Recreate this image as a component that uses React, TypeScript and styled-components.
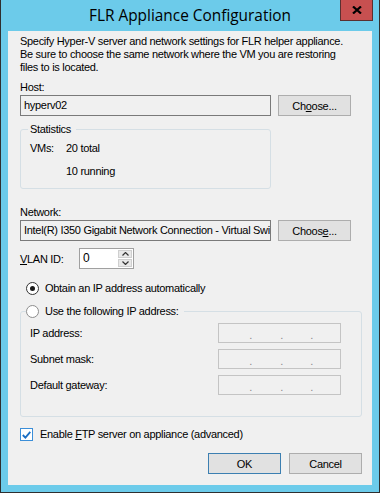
import React from "react";
import styled, { createGlobalStyle } from "styled-components";

const GlobalStyle = createGlobalStyle`
  html, body { margin: 0; padding: 0; background: #ffffff; }
  * { box-sizing: border-box; }
`;

const Window = styled.div`
  width: 380px;
  height: 493px;
  background: #6ccbea;
  border: 1px solid #2f2f2f;
  border-top: none;
  display: flex;
  flex-direction: column;
  font-family: "Liberation Sans", Arial, sans-serif;
  font-size: 11px;
  letter-spacing: -0.3px;
  color: #000;
`;

const TitleBar = styled.div`
  height: 31px;
  display: grid;
  grid-template-columns: 33px 1fr 33px;
  padding: 0 6px;
`;

const Title = styled.div`
  grid-column: 2;
  text-align: center;
  font-family: "Open Sans", "Noto Sans", sans-serif;
  font-size: 15.4px;
  letter-spacing: 0;
  line-height: 31px;
  color: #000;
`;

const CloseButton = styled.div`
  grid-column: 3;
  width: 33px;
  height: 21px;
  background: #c75050;
  border: 1px solid #5a3030;
  border-top: none;
  display: flex;
  align-items: center;
  justify-content: center;
`;

const Client = styled.main`
  flex: 1;
  margin: 0 7px 7px 7px;
  background: #f0f0f0;
  padding: 4px 10px 0 12px;
  display: flex;
  flex-direction: column;
`;

const Text = styled.p`
  margin: 0;
  line-height: 13px;
  white-space: nowrap;
`;

const Label = styled.div<{ $top?: number }>`
  margin-top: ${(p) => p.$top ?? 7}px;
  line-height: 13px;
`;

const Row = styled.div<{ $top?: number; $gap?: number }>`
  display: flex;
  align-items: center;
  gap: ${(p) => p.$gap ?? 7}px;
  margin-top: ${(p) => p.$top ?? 1}px;
`;

const TextBox = styled.div<{ $width: number }>`
  width: ${(p) => p.$width}px;
  height: 21px;
  border: 1px solid #7a7a7a;
  background: #f0f0f0;
  padding: 0 3px;
  line-height: 19px;
  white-space: nowrap;
  overflow: hidden;
`;

const Button = styled.button<{ $default?: boolean }>`
  width: 73px;
  height: 21px;
  margin: 0;
  padding: 0;
  font: inherit;
  letter-spacing: inherit;
  color: #000;
  background: #e1e1e1;
  border: 1px solid ${(p) => (p.$default ? "#3c7fb1" : "#adadad")};
`;

const GroupBox = styled.fieldset<{ $width: number; $top: number }>`
  width: ${(p) => p.$width}px;
  margin: ${(p) => p.$top}px 0 0 0;
  border: 1px solid #d5dfe5;
  border-radius: 3px;
  min-width: 0;
`;

const Legend = styled.legend<{ $indent: number; $padLeft?: number }>`
  margin-left: ${(p) => p.$indent}px;
  padding: 0 5px 0 ${(p) => p.$padLeft ?? 2}px;
  line-height: 13px;
  display: flex;
  align-items: center;
`;

const StatsGroup = styled(GroupBox)`
  padding: 6px 9px 10px 9px;
  display: grid;
  grid-template-columns: 36px 1fr;
  row-gap: 10px;
  line-height: 13px;
`;

const IpGroup = styled(GroupBox)`
  padding: 5px 20px 21px 9px;
  display: flex;
  flex-direction: column;
  gap: 6px;
`;

const IpRow = styled.div`
  display: flex;
  align-items: center;
  justify-content: space-between;
`;

const IpBox = styled.div`
  width: 123px;
  height: 20px;
  border: 1px solid #c4c4c4;
  background: #f0f0f0;
  display: grid;
  grid-template-columns: 33px 31px 30px 1fr;
`;

const IpDot = styled.span`
  display: flex;
  justify-content: flex-end;
  align-items: flex-end;
  padding-bottom: 3px;
  color: #8a8a8a;
  line-height: 8px;
`;

const VlanLabel = styled.span`
  width: 59px;
`;

const SpinBox = styled.div`
  display: flex;
  width: 55px;
  height: 21px;
  border: 1px solid #a0a0a0;
  background: #ffffff;
`;

const SpinText = styled.div`
  flex: 1;
  padding: 0 3px;
  line-height: 19px;
  font-size: 12px;
`;

const SpinButtons = styled.div`
  width: 15px;
  display: flex;
  flex-direction: column;
  gap: 1px;
  padding: 1px 1px 1px 0;
`;

const SpinButton = styled.div`
  flex: 1;
  background: #e8e8e8;
  border: 1px solid #cfcfcf;
  display: flex;
  align-items: center;
  justify-content: center;
`;

const RadioRow = styled.label<{ $top?: number; $indent?: number }>`
  display: flex;
  align-items: center;
  gap: 6px;
  line-height: 13px;
  margin-top: ${(p) => p.$top ?? 0}px;
  padding-left: ${(p) => p.$indent ?? 0}px;
`;

const RadioCircle = styled.span<{ $checked?: boolean }>`
  width: 13px;
  height: 13px;
  border-radius: 50%;
  border: 1px solid ${(p) => (p.$checked ? "#333333" : "#8d8d8d")};
  background: #ffffff;
  display: flex;
  align-items: center;
  justify-content: center;
  &::after {
    content: "";
    width: 5px;
    height: 5px;
    border-radius: 50%;
    background: ${(p) => (p.$checked ? "#1a1a1a" : "transparent")};
  }
`;

const CheckRow = styled.label`
  display: flex;
  align-items: center;
  gap: 7px;
  line-height: 13px;
  margin-top: 11px;
`;

const CheckBox = styled.span`
  width: 13px;
  height: 13px;
  border: 1px solid #3b8ed8;
  background: #ffffff;
  display: flex;
  align-items: center;
  justify-content: center;
`;

const Footer = styled.div`
  display: flex;
  justify-content: flex-end;
  gap: 8px;
  margin-top: 12px;
`;

function Arrow({ up }: { up?: boolean }) {
  return (
    <svg width="7" height="4" viewBox="0 0 7 4">
      <path
        d={up ? "M0.5 3.5 L3.5 0.5 L6.5 3.5" : "M0.5 0.5 L3.5 3.5 L6.5 0.5"}
        fill="none"
        stroke="#333"
        strokeWidth="1.2"
      />
    </svg>
  );
}

function IpField() {
  return (
    <IpBox>
      <IpDot>.</IpDot>
      <IpDot>.</IpDot>
      <IpDot>.</IpDot>
      <span />
    </IpBox>
  );
}

export default function App() {
  return (
    <>
      <GlobalStyle />
      <Window>
        <TitleBar>
          <Title>FLR Appliance Configuration</Title>
          <CloseButton>
            <svg width="10" height="8" viewBox="0 0 10 8">
              <path d="M1 0.5 L9 7.5 M9 0.5 L1 7.5" stroke="#000" strokeWidth="2.2" />
            </svg>
          </CloseButton>
        </TitleBar>
        <Client>
          <Text>
            Specify Hyper-V server and network settings for FLR helper appliance.
            <br />
            Be sure to choose the same network where the VM you are restoring
            <br />
            files to is located.
          </Text>

          <Label>Host:</Label>
          <Row>
            <TextBox $width={251}>hyperv02</TextBox>
            <Button>
              Ch<u>o</u>ose...
            </Button>
          </Row>

          <StatsGroup $width={251} $top={7}>
            <Legend $indent={-2}>Statistics</Legend>
            <span>VMs:</span>
            <span>20 total</span>
            <span />
            <span>10 running</span>
          </StatsGroup>

          <Label $top={17}>Network:</Label>
          <Row>
            <TextBox $width={251}>Intel(R) I350 Gigabit Network Connection - Virtual Switch</TextBox>
            <Button>
              Choos<u>e</u>...
            </Button>
          </Row>

          <Row $top={7} $gap={0}>
            <VlanLabel>
              <u>V</u>LAN ID:
            </VlanLabel>
            <SpinBox>
              <SpinText>0</SpinText>
              <SpinButtons>
                <SpinButton>
                  <Arrow up />
                </SpinButton>
                <SpinButton>
                  <Arrow />
                </SpinButton>
              </SpinButtons>
            </SpinBox>
          </Row>

          <RadioRow $top={13} $indent={6}>
            <RadioCircle $checked />
            Obtain an IP address automatically
          </RadioRow>

          <IpGroup $width={342} $top={10}>
            <Legend $indent={-4} $padLeft={0}>
              <RadioRow>
                <RadioCircle />
                Use the following IP address:
              </RadioRow>
            </Legend>
            <IpRow>
              <span>IP address:</span>
              <IpField />
            </IpRow>
            <IpRow>
              <span>Subnet mask:</span>
              <IpField />
            </IpRow>
            <IpRow>
              <span>Default gateway:</span>
              <IpField />
            </IpRow>
          </IpGroup>

          <CheckRow>
            <CheckBox>
              <svg width="9" height="8" viewBox="0 0 9 8">
                <path d="M0.8 4 L3.4 6.6 L8.3 0.8" fill="none" stroke="#1c6fc4" strokeWidth="1.8" />
              </svg>
            </CheckBox>
            <span>
              Enable <u>F</u>TP server on appliance (advanced)
            </span>
          </CheckRow>

          <Footer>
            <Button $default>OK</Button>
            <Button>Cancel</Button>
          </Footer>
        </Client>
      </Window>
    </>
  );
}
